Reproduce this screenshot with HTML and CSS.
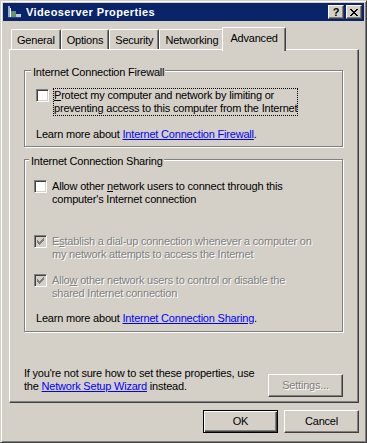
FILE: index.html
```html
<!DOCTYPE html>
<html lang="en">
<head>
    <meta charset="UTF-8">
    <meta name="viewport" content="width=device-width, initial-scale=1.0">
    <title>Videoserver Properties</title>
    <link rel="stylesheet" href="styles.css">
</head>
<body>
    <div class="window">
        <div class="titlebar">
            <svg class="app-icon" width="16" height="16" viewBox="0 0 16 16" shape-rendering="crispEdges">
                <path d="M2 2h2v11H2z" fill="#9aa8c8"/>
                <path d="M4 4h1v9H4z" fill="#ffffff"/>
                <path d="M5 7h5v6H5z" fill="#6c7fa8"/>
                <path d="M6 8h3v4H6z" fill="#58a848"/>
                <path d="M10 10h5v3h-5z" fill="#c0c8dc"/>
                <path d="M2 13h13v1H2z" fill="#30406c"/>
            </svg>
            <span class="title">Videoserver Properties</span>
            <div class="caption-buttons">
                <span class="cap-btn">?</span>
                <span class="cap-btn">
                    <svg width="8" height="7" viewBox="0 0 8 7" shape-rendering="crispEdges">
                        <path d="M0 0h2v1h1v1h2V1h1V0h2v1H7v1H6v1H5v1h1v1h1v1h1v1H6V6H5V5H3v1H2v1H0V6h1V5h1V4h1V3H2V2H1V1H0z" fill="#000"/>
                    </svg>
                </span>
            </div>
        </div>

        <div class="client">
            <div class="tabs">
                <div class="tab">General</div>
                <div class="tab">Options</div>
                <div class="tab">Security</div>
                <div class="tab">Networking</div>
                <div class="tab selected">Advanced</div>
            </div>

            <div class="panel">
                <div class="group">
                    <div class="group-title">Internet Connection Firewall</div>
                    <div class="check-row first">
                        <span class="check"></span>
                        <span class="check-label focused"><u>P</u>rotect my computer and network by limiting or<br>preventing access to this computer from the Internet</span>
                    </div>
                    <p class="learn">Learn more about <a href="#">Internet Connection Firewall</a>.</p>
                </div>

                <div class="group sharing">
                    <div class="group-title">Internet Connection Sharing</div>
                    <div class="check-row">
                        <span class="check"></span>
                        <span class="check-label">Allow other <u>n</u>etwork users to connect through this<br>computer's Internet connection</span>
                    </div>
                    <div class="check-row spaced disabled">
                        <span class="check checked">
                            <svg width="11" height="11" viewBox="0 0 11 11" shape-rendering="crispEdges">
                                <path d="M8 2h1v1H8zM7 3h2v1H7zM2 4h1v1H2zM6 4h3v1H6zM2 5h2v1H2zM5 5h3v1H5zM2 6h5v1H2zM3 7h3v1H3zM4 8h1v1H4z" fill="#808080"/>
                            </svg>
                        </span>
                        <span class="check-label">E<u>s</u>tablish a dial-up connection whenever a computer on<br>my network attempts to access the Internet</span>
                    </div>
                    <div class="check-row disabled">
                        <span class="check checked">
                            <svg width="11" height="11" viewBox="0 0 11 11" shape-rendering="crispEdges">
                                <path d="M8 2h1v1H8zM7 3h2v1H7zM2 4h1v1H2zM6 4h3v1H6zM2 5h2v1H2zM5 5h3v1H5zM2 6h5v1H2zM3 7h3v1H3zM4 8h1v1H4z" fill="#808080"/>
                            </svg>
                        </span>
                        <span class="check-label">Allo<u>w</u> other network users to control or disable the<br>shared Internet connection</span>
                    </div>
                    <p class="learn">Learn more about <a href="#">Internet Connection Sharing</a>.</p>
                </div>

                <div class="note-row">
                    <p class="note">If you're not sure how to set these properties, use<br>the <a href="#">Network Setup Wizard</a> instead.</p>
                    <button class="btn" disabled>Settin<u>g</u>s...</button>
                </div>
            </div>

            <div class="dialog-buttons">
                <button class="btn default">OK</button>
                <button class="btn">Cancel</button>
            </div>
        </div>
    </div>
</body>
</html>
```

FILE: styles.css
```css
body {
  margin: 0;
  font-family: "Liberation Sans", Arial, sans-serif;
  font-size: 11px;
  line-height: 13px;
  letter-spacing: -0.2px;
  color: #000;
  background-color: #d4d0c8;
}

.window {
  width: 367px;
  height: 443px;
  box-sizing: border-box;
  padding: 2px;
  background-color: #d4d0c8;
  border: 1px solid;
  border-color: #d4d0c8 #404040 #404040 #d4d0c8;
  box-shadow: inset 1px 1px 0 #fff, inset -1px -1px 0 #808080;
}

/* title bar */
.titlebar {
  height: 18px;
  display: flex;
  align-items: center;
  padding: 0 2px 0 3px;
  background-color: #0a246a;
}

.app-icon {
  flex: none;
}

.title {
  margin-left: 4px;
  color: #fff;
  font-weight: bold;
  letter-spacing: 0.4px;
  flex: 1;
}

.caption-buttons {
  display: flex;
  gap: 2px;
}

.cap-btn {
  width: 16px;
  height: 14px;
  box-sizing: border-box;
  display: flex;
  align-items: center;
  justify-content: center;
  border: 1px solid;
  border-color: #fff #404040 #404040 #fff;
  box-shadow: inset -1px -1px 0 #808080;
  background-color: #d4d0c8;
  font-weight: bold;
  font-size: 11px;
  line-height: 12px;
  letter-spacing: 0;
}

/* tabs */
.client {
  padding: 6px 5px 0 6px;
}

.tabs {
  display: flex;
  align-items: flex-end;
  height: 22px;
  padding-left: 2px;
}

.tab {
  height: 20px;
  box-sizing: border-box;
  padding: 4px 5px 0 5px;
  border-top: 1px solid #fff;
  border-left: 1px solid #fff;
  border-right: 1px solid #404040;
  border-radius: 2px 2px 0 0;
  box-shadow: inset -1px 0 0 #808080;
}

.tab.selected {
  position: relative;
  z-index: 1;
  height: 24px;
  margin: 0 -2px -2px -2px;
  padding: 4px 7px 0 7px;
  background-color: #d4d0c8;
}

.panel {
  height: 354px;
  box-sizing: border-box;
  padding: 20px 15px 0 14px;
  border: 1px solid;
  border-color: #fff #404040 #404040 #fff;
  box-shadow: inset -1px -1px 0 #808080;
}

/* group boxes */
.group {
  padding: 0 0 5px 11px;
  border: 1px solid #808080;
  box-shadow: 1px 1px 0 #fff, inset 1px 1px 0 #fff;
}

.group.sharing {
  margin-top: 12px;
  padding-left: 9px;
  padding-bottom: 6px;
}

.group-title {
  display: block;
  width: fit-content;
  margin: -5px 0 0 -5px;
  padding: 0 1px 0 2px;
  background-color: #d4d0c8;
}

.check-row {
  display: flex;
  align-items: flex-start;
  gap: 4px;
  margin-top: 9px;
}

.group.sharing .check-row {
  margin-top: 11px;
}

.group.sharing .check-row:first-of-type {
  margin-top: 10px;
}

.group.sharing .check-row.spaced {
  margin-top: 27px;
}

.check {
  flex: none;
  width: 13px;
  height: 13px;
  margin-top: 1px;
  box-sizing: border-box;
  border: 1px solid;
  border-color: #808080 #fff #fff #808080;
  box-shadow: inset 1px 1px 0 #404040, inset -1px -1px 0 #d4d0c8;
  background-color: #fff;
}

.check svg {
  display: block;
}

.check.checked {
  background-color: #d4d0c8;
}

.check-label {
  border: 1px dotted transparent;
}

.check-label.focused {
  border-color: #000;
}

.disabled .check-label {
  color: #808080;
  text-shadow: 1px 1px 0 #fff;
}

.learn {
  margin: 12px 0 0 0;
}

.group.sharing .learn {
  margin-left: 2px;
  margin-top: 11px;
}

a {
  color: #0000ff;
  text-decoration: underline;
}

/* bottom of the tab page */
.note-row {
  display: flex;
  justify-content: space-between;
  align-items: flex-start;
  margin-top: 35px;
}

.note {
  margin: 0;
}

.btn {
  width: 75px;
  height: 23px;
  box-sizing: border-box;
  padding: 0;
  font: inherit;
  letter-spacing: inherit;
  color: #000;
  background-color: #d4d0c8;
  border: 1px solid;
  border-color: #fff #404040 #404040 #fff;
  box-shadow: inset -1px -1px 0 #808080;
}

.btn:disabled {
  color: #808080;
  text-shadow: 1px 1px 0 #fff;
}

.note-row .btn {
  margin-top: 7px;
}

.btn.default {
  border-color: #000;
  box-shadow: inset 1px 1px 0 #fff, inset -1px -1px 0 #404040, inset -2px -2px 0 #808080;
}

.dialog-buttons {
  display: flex;
  justify-content: flex-end;
  gap: 6px;
  margin-top: 7px;
}
```
